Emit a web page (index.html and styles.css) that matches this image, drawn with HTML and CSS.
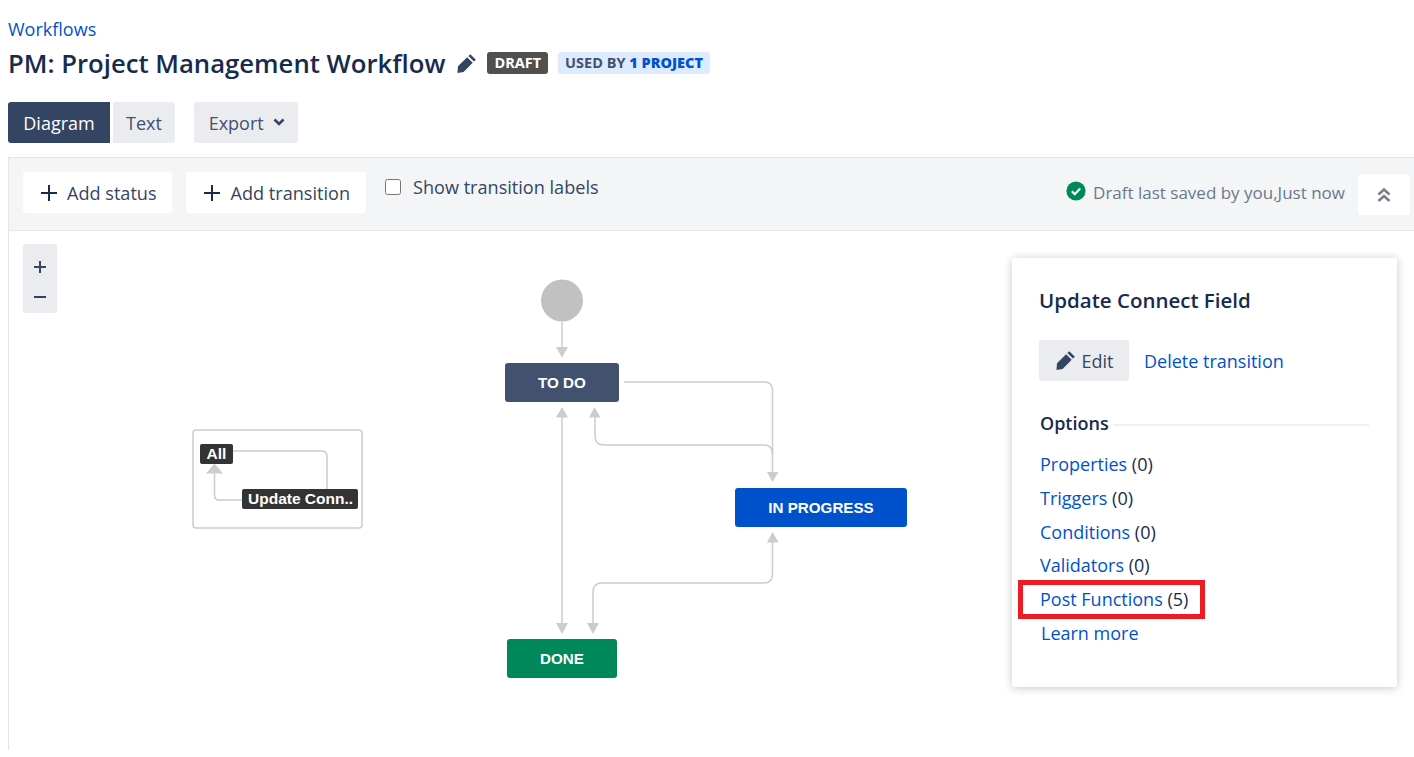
FILE: index.html
```html
<!DOCTYPE html>
<html lang="en">
<head>
    <meta charset="UTF-8">
    <title>PM: Project Management Workflow</title>
    <link rel="stylesheet" href="styles.css">
</head>
<body>
    <a class="crumb" href="#">Workflows</a>
    <div class="title-row">
        <h1>PM: Project Management Workflow</h1>
        <svg class="title-pencil" width="21" height="21" viewBox="0 0 20 20"><path d="M13.600 1.100l5.300 5.300-1.800 1.800-5.300-5.300zM10.600 4l5.300 5.300-8.700 8.700-5.800 1.100.5-6.400z" fill="#344563"/></svg>
        <span class="badge badge-draft">DRAFT</span>
        <span class="badge badge-used">USED BY <b>1 PROJECT</b></span>
    </div>
    <div class="tabs">
        <button class="tab tab-active">Diagram</button>
        <button class="tab tab-text">Text</button>
        <button class="tab tab-export">Export
            <svg width="12" height="8" viewBox="0 0 12 8"><path d="M1.500 1.500L6 6l4.500-4.500" fill="none" stroke="#344563" stroke-width="2.600"/></svg>
        </button>
    </div>

    <div class="editor">
        <div class="toolbar">
            <button class="tool-btn"><span class="plus"></span>Add status</button>
            <button class="tool-btn"><span class="plus"></span>Add transition</button>
            <label class="show-labels"><input type="checkbox">Show transition labels</label>
            <div class="saved">
                <svg width="20" height="20" viewBox="0 0 20 20"><circle cx="10" cy="10" r="9.600" fill="#00875a"/><path d="M5.800 10.200l3 3 5.400-5.600" fill="none" stroke="#fff" stroke-width="2.200"/></svg>
                <span>Draft last saved by you,Just now</span>
            </div>
            <button class="collapse-btn">
                <svg width="14" height="16" viewBox="0 0 14 16"><path d="M1.500 7.500L7 2.500l5.500 5M1.500 14L7 9l5.500 5" fill="none" stroke="#7a7f88" stroke-width="2.600"/></svg>
            </button>
        </div>

        <div class="canvas">
            <div class="zoom">
                <span class="zoom-btn zoom-in"></span>
                <span class="zoom-btn zoom-out"></span>
            </div>

            <!-- viewBox is in page coordinates so the edges are easy to read -->
            <svg class="edges" viewBox="9 231 1405 519" width="1405" height="519">
                <circle cx="562" cy="300.500" r="21" fill="#c1c1c1"/>
                <g fill="none" stroke="#ccc" stroke-width="1.500">
                    <path d="M562 322V348"/>
                    <path d="M624 382H764Q772.500 382 772.500 390V473"/>
                    <path d="M772.500 454Q772.500 445 764 445H604Q595 445 595 436V416"/>
                    <path d="M562 416V624"/>
                    <path d="M772.500 541V574Q772.500 583 764 583H602Q593 583 593 592V624"/>
                    <rect x="193" y="430" width="169" height="98" rx="3"/>
                    <path d="M233 451H322Q327 451 327 456V489"/>
                    <path d="M242 500H219Q214.500 500 214.500 495V473"/>
                </g>
                <g fill="#ccc">
                    <path d="M556 347H568L562 357.500z"/>
                    <path d="M767 472H778.500L772.500 482z"/>
                    <path d="M589 417.500H600.500L594.500 407z"/>
                    <path d="M556 417.500H568L562 407z"/>
                    <path d="M556 623H568L562 634z"/>
                    <path d="M587 623H599L593 634z"/>
                    <path d="M767 542.500H778.500L772.500 532z"/>
                    <path d="M206 473.500H223L214.500 463.500z"/>
                </g>
            </svg>

            <div class="node node-todo">TO DO</div>
            <div class="node node-progress">IN PROGRESS</div>
            <div class="node node-done">DONE</div>
            <div class="tag tag-all">All</div>
            <div class="tag tag-update">Update Conn..</div>

            <div class="props">
                <h3>Update Connect Field</h3>
                <div class="props-actions">
                    <button class="edit-btn">
                        <svg width="21" height="21" viewBox="0 0 20 20"><path d="M13.600 1.100l5.300 5.300-1.800 1.800-5.300-5.300zM10.600 4l5.300 5.300-8.700 8.700-5.800 1.100.5-6.400z" fill="#344563"/></svg>
                        Edit
                    </button>
                    <a href="#">Delete transition</a>
                </div>
                <div class="options-head"><span>Options</span></div>
                <ul class="options">
                    <li><a href="#">Properties</a> (0)</li>
                    <li><a href="#">Triggers</a> (0)</li>
                    <li><a href="#">Conditions</a> (0)</li>
                    <li><a href="#">Validators</a> (0)</li>
                    <li class="marked"><a href="#">Post Functions</a> (5)</li>
                    <li class="learn"><a href="#">Learn more</a></li>
                </ul>
            </div>
        </div>
    </div>
</body>
</html>
```

FILE: styles.css
```css
body {
    margin: 0;
    padding: 17px 0 0 8px;
    height: 740px;
    overflow: hidden;
    font-family: "Open Sans", "Noto Sans", sans-serif;
    font-size: 18px;
    color: #172b4d;
    background: #fff;
}

a {
    color: #0052cc;
    text-decoration: none;
}

button {
    font-family: inherit;
    border: none;
    cursor: pointer;
}

.crumb {
    display: block;
    height: 25px;
    line-height: 25px;
    font-size: 18px;
}

.title-row {
    display: flex;
    align-items: center;
    height: 42px;
}

h1 {
    margin: 0;
    font-size: 25.700px;
    font-weight: 600;
    white-space: nowrap;
}

.title-pencil {
    margin-left: 11px;
}

.badge {
    display: block;
    height: 22px;
    line-height: 22px;
    padding: 0 7px;
    border-radius: 3px;
    font-size: 14.500px;
    font-weight: 700;
    white-space: nowrap;
}

.badge-draft {
    margin-left: 10px;
    background: #505050;
    color: #fff;
}

.badge-used {
    margin-left: 10px;
    background: #deebff;
    color: #42526e;
}

.badge-used b {
    color: #0052cc;
}

.tabs {
    display: flex;
    margin-top: 18px;
    height: 41px;
}

.tab {
    height: 41px;
    padding: 0;
    font-size: 18px;
    background: #ebecf0;
    color: #42526e;
    border-radius: 3px;
}

.tab-active {
    width: 102px;
    background: #344563;
    color: #fff;
    border-radius: 3px 0 0 3px;
}

.tab-text {
    width: 62px;
    margin-left: 3px;
    border-radius: 0 3px 3px 0;
}

.tab-export {
    width: 104px;
    margin-left: 19px;
    padding-left: 2px;
}

.tab-export svg {
    margin-left: 5px;
    vertical-align: 4px;
}

.editor {
    margin-top: 14px;
    border-left: 1px solid #e3e4e8;
    border-top: 1px solid #e3e4e8;
}

.toolbar {
    display: flex;
    align-items: flex-start;
    height: 73px;
    padding: 14px 4px 0 14px;
    box-sizing: border-box;
    background: #f4f5f7;
    border-bottom: 1px solid #e6e7ea;
}

.tool-btn {
    display: flex;
    align-items: center;
    height: 41px;
    padding: 0 15px 0 18px;
    margin-right: 14px;
    background: #fff;
    border-radius: 3px;
    font-size: 18.100px;
    color: #344563;
}

.tool-btn + .tool-btn {
    padding: 0 16px 0 18px;
}

.plus {
    width: 16px;
    height: 16px;
    margin-right: 10px;
    background:
        linear-gradient(#172b4d, #172b4d) center / 16px 2px no-repeat,
        linear-gradient(#172b4d, #172b4d) center / 2px 16px no-repeat;
}

.tool-btn + .tool-btn .plus {
    margin-right: 11px;
}

.show-labels {
    display: flex;
    align-items: center;
    margin: 2px 0 0 5px;
    height: 26px;
    font-size: 18.100px;
    color: #344563;
}

.show-labels input {
    width: 16px;
    height: 16px;
    margin: 0 12px 0 0;
}

.saved {
    display: flex;
    align-items: center;
    gap: 7px;
    height: 41px;
    margin-left: auto;
    font-size: 17px;
    color: #6b778c;
}

.saved svg {
    margin-top: -4px;
}

.collapse-btn {
    display: flex;
    align-items: center;
    justify-content: center;
    width: 52px;
    height: 41px;
    margin: 2px 0 0 13px;
    padding: 0;
    background: #fff;
    border-radius: 3px;
}

.canvas {
    position: relative;
    height: 519px;
}

.edges {
    position: absolute;
    top: 0;
    left: 0;
}

.zoom {
    position: absolute;
    z-index: 1;
    left: 14px;
    top: 13px;
    width: 34px;
    height: 69px;
    box-sizing: border-box;
    padding-top: 8px;
    background: #ebecf0;
    border-radius: 3px;
}

.zoom-btn {
    display: block;
    height: 30px;
}

.zoom-in {
    background:
        linear-gradient(#344563, #344563) center / 12px 2px no-repeat,
        linear-gradient(#344563, #344563) center / 2px 12px no-repeat;
}

.zoom-out {
    background: linear-gradient(#344563, #344563) center / 12px 2px no-repeat;
}

.node {
    position: absolute;
    height: 39px;
    line-height: 40px;
    text-align: center;
    border-radius: 3px;
    color: #fff;
    font-family: "Liberation Sans", sans-serif;
    font-size: 15.200px;
    font-weight: 700;
}

.node-todo {
    left: 496px;
    top: 132px;
    width: 114px;
    background: #42526e;
}

.node-progress {
    left: 726px;
    top: 257px;
    width: 172px;
    background: #0052cc;
}

.node-done {
    left: 498px;
    top: 408px;
    width: 110px;
    background: #00875a;
}

.tag {
    position: absolute;
    height: 20px;
    line-height: 19px;
    border-radius: 2px;
    background: #333;
    color: #fff;
    font-family: "Liberation Sans", sans-serif;
    font-size: 15.500px;
    font-weight: 700;
    white-space: nowrap;
}

.tag-all {
    left: 191px;
    top: 213px;
    width: 33px;
    text-align: center;
}

.tag-update {
    left: 233px;
    top: 258px;
    width: 116px;
    box-sizing: border-box;
    padding-left: 6px;
    overflow: hidden;
}

.props {
    position: absolute;
    left: 1003px;
    top: 27px;
    width: 385px;
    height: 429px;
    box-sizing: border-box;
    padding: 27px 28px 0 28px;
    background: #fff;
    border-radius: 3px;
    box-shadow: 0 1px 8px rgba(9, 30, 66, 0.25);
}

.props h3 {
    margin: 0 0 0 -1px;
    height: 30px;
    line-height: 30px;
    font-size: 20.500px;
    font-weight: 600;
}

.props-actions {
    display: flex;
    align-items: center;
    margin-top: 25px;
}

.edit-btn {
    display: flex;
    align-items: center;
    justify-content: center;
    gap: 6px;
    width: 90px;
    height: 41px;
    margin-left: -1px;
    margin-right: 15px;
    padding: 0;
    background: #ebecf0;
    border-radius: 3px;
    font-size: 18px;
    color: #344563;
}

.props-actions a {
    font-size: 18px;
}

.options-head {
    display: flex;
    align-items: center;
    margin-top: 28px;
    height: 28px;
    font-weight: 600;
    font-size: 18px;
}

.options-head::after {
    content: "";
    flex: 1;
    height: 2px;
    margin: 3px 0 0 4px;
    background: #f0f0f0;
}

.options {
    list-style: none;
    margin: 11px 0 0;
    padding: 0;
    font-size: 18px;
}

.options li {
    height: 33.800px;
    line-height: 33.800px;
}

.marked {
    position: relative;
}

/* red annotation around the row */
.marked::after {
    content: "";
    position: absolute;
    left: -22px;
    top: -3px;
    width: 187px;
    height: 39px;
    box-sizing: border-box;
    border: 5px solid #ed1c24;
}

.learn {
    padding-left: 1px;
}
```
